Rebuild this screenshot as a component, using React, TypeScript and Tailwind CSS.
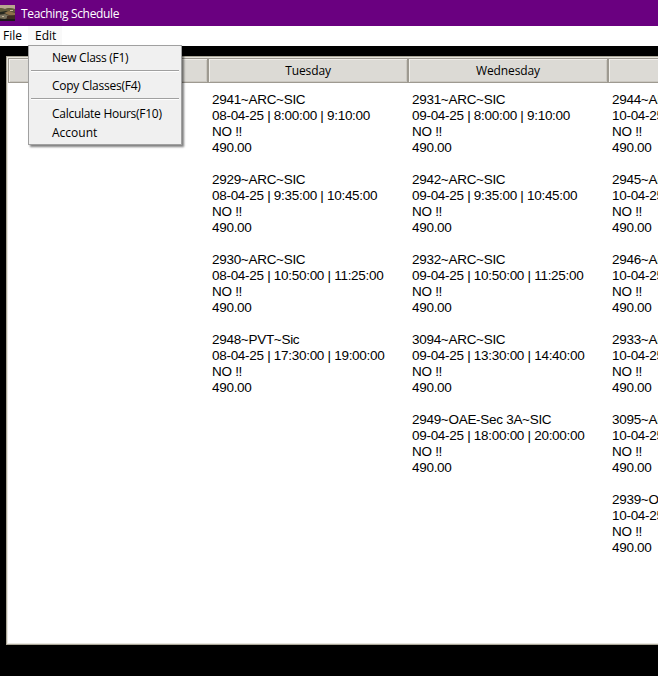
import React from "react";

const UI = "font-['Open_Sans','Noto_Sans',sans-serif]";

type Entry = [title: string, time: string];

const days: { name: string; entries: Entry[] }[] = [
  { name: "", entries: [] },
  {
    name: "Tuesday",
    entries: [
      ["2941~ARC~SIC", "08-04-25 | 8:00:00 | 9:10:00"],
      ["2929~ARC~SIC", "08-04-25 | 9:35:00 | 10:45:00"],
      ["2930~ARC~SIC", "08-04-25 | 10:50:00 | 11:25:00"],
      ["2948~PVT~Sic", "08-04-25 | 17:30:00 | 19:00:00"],
    ],
  },
  {
    name: "Wednesday",
    entries: [
      ["2931~ARC~SIC", "09-04-25 | 8:00:00 | 9:10:00"],
      ["2942~ARC~SIC", "09-04-25 | 9:35:00 | 10:45:00"],
      ["2932~ARC~SIC", "09-04-25 | 10:50:00 | 11:25:00"],
      ["3094~ARC~SIC", "09-04-25 | 13:30:00 | 14:40:00"],
      ["2949~OAE-Sec 3A~SIC", "09-04-25 | 18:00:00 | 20:00:00"],
    ],
  },
  {
    name: "",
    entries: [
      ["2944~ARC", "10-04-25"],
      ["2945~ARC", "10-04-25"],
      ["2946~ARC", "10-04-25"],
      ["2933~ARC", "10-04-25"],
      ["3095~ARC", "10-04-25"],
      ["2939~OAE", "10-04-25"],
    ],
  },
];

function AppIcon() {
  return (
    <svg width="15" height="16" viewBox="0 0 15 16" className="shrink-0">
      <rect width="15" height="16" fill="#4c4434" />
      <path d="M0 0h15v4L9 3 5 4 0 3z" fill="#b9a68f" />
      <path d="M0 3l5 1 4-1 6 1v3L8 6 0 8z" fill="#635b3c" />
      <path d="M0 7l6-1 3 2-4 2-5-1z" fill="#252820" />
      <path d="M4 8l5-2 6 2v3l-6-1z" fill="#8d7049" />
      <path d="M0 10l5-1 4 2-4 3-5-1z" fill="#77705e" />
      <path d="M7 11l8-1v4l-8 1z" fill="#3f2c22" />
      <path d="M0 14h15v2H0z" fill="#1d1b1a" />
      <path d="M10 5h3v1h-3zM2 11h2v1H2z" fill="#c7b795" />
    </svg>
  );
}

function MenuRule() {
  return <div className="mx-0.5 h-0.5 border-t border-b border-t-[#a0a0a0] border-b-white" />;
}

function EditMenu() {
  return (
    <div
      className={`absolute left-[28px] top-[19px] z-10 h-[100px] w-[154px] border border-[#a0a0a0] bg-[#f0f0f0] pt-0.5 text-[12px] leading-[19px] shadow-[2px_2px_2px_rgba(0,0,0,0.5)] ${UI}`}
    >
      <div className="h-[22px] pl-[23px] tracking-[-0.27px]">New Class (F1)</div>
      <MenuRule />
      <div className="h-[26px] pt-1 pl-[23px] tracking-[-0.25px]">Copy Classes(F4)</div>
      <MenuRule />
      <div className="h-[23px] pt-1 pl-[23px] tracking-[-0.28px]">Calculate Hours(F10)</div>
      <div className="pl-[23px]">Account</div>
    </div>
  );
}

export default function App() {
  return (
    <div className="flex h-[676px] w-[658px] flex-col overflow-hidden bg-black text-black">
      <header className={`flex h-[26px] shrink-0 items-center bg-[#6a0080] text-[12px] text-white ${UI}`}>
        <AppIcon />
        <span className="ml-1.5 pt-0.5 tracking-[-0.35px]">Teaching Schedule</span>
      </header>
      <nav className={`relative flex h-5 shrink-0 bg-white text-[12px] leading-[19px] ${UI}`}>
        <div className="w-7 pl-[3px]">File</div>
        <div className="w-[34px] bg-[#f9f9f9] pl-[7px]">Edit</div>
        <EditMenu />
      </nav>
      <main className="mt-2.5 ml-1.5 flex h-[589px] w-[852px] shrink-0 flex-col border border-[#aca899] bg-white">
        <div className="flex h-full border border-[#e8e6e0]">
          {days.map((day, i) => (
            <section key={i} className="w-[200px] shrink-0">
              <div
                className={`h-[25px] border border-[#9e9a91] bg-[#dcdad5] text-center text-[12px] leading-[24px] tracking-[-0.1px] shadow-[inset_1px_1px_0_#f2f0ec,inset_-1px_-1px_0_#cbc8c1] ${UI}`}
              >
                {day.name}
              </div>
              <div className="flex flex-col gap-4 pt-[9px] pl-1 font-['Liberation_Sans',Arial,sans-serif] text-[13.5px] leading-4 tracking-[-0.29px] whitespace-nowrap">
                {day.entries.map(([title, time]) => (
                  <div key={title}>
                    <div>{title}</div>
                    <div>{time}</div>
                    <div>NO !!</div>
                    <div>490.00</div>
                  </div>
                ))}
              </div>
            </section>
          ))}
        </div>
      </main>
    </div>
  );
}
